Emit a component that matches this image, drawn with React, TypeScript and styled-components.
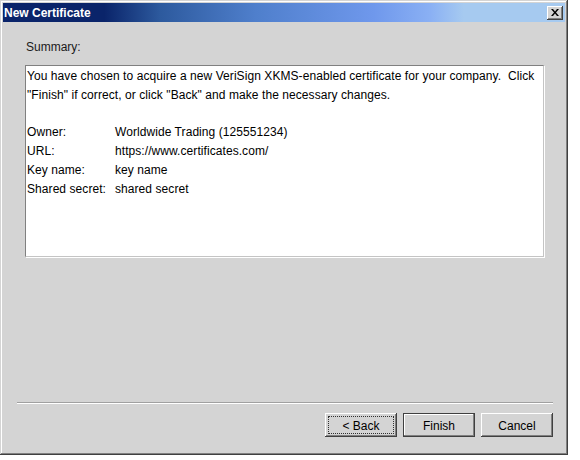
import styled, {createGlobalStyle} from 'styled-components';

const GlobalStyle = createGlobalStyle`
  body {
    margin: 0;
    background: #ffffff;
    font-family: "Liberation Sans", Arial, sans-serif;
  }
`

const details = [
    {label: 'Owner:', value: 'Worldwide Trading (125551234)'},
    {label: 'URL:', value: 'https://www.certificates.com/'},
    {label: 'Key name:', value: 'key name'},
    {label: 'Shared secret:', value: 'shared secret'},
]

export default function App() {
    return (
        <>
            <GlobalStyle/>
            <Window>
                <TitleBar>
                    <Title>New Certificate</Title>
                    <CloseButton aria-label="close">
                        <svg width="8" height="7" viewBox="0 0 8 7">
                            <path d="M0 0h2l2 2.5L6 0h2L5 3.5 8 7H6L4 4.5 2 7H0l3-3.5z" fill="#000"/>
                        </svg>
                    </CloseButton>
                </TitleBar>
                <Body>
                    <Label>Summary:</Label>
                    <SummaryBox>
                        <Paragraph>
                            You have chosen to acquire a new VeriSign XKMS-enabled certificate for your company.{'  '}Click
                            <br/>
                            "Finish" if correct, or click "Back" and make the necessary changes.
                        </Paragraph>
                        <Details>
                            {details.map(d => (
                                <Row key={d.label}>
                                    <span>{d.label}</span>
                                    <span>{d.value}</span>
                                </Row>
                            ))}
                        </Details>
                    </SummaryBox>
                </Body>
                <Footer>
                    <Separator/>
                    <ButtonRow>
                        <Button $focused>&lt; Back</Button>
                        <Button $default>Finish</Button>
                        <Button>Cancel</Button>
                    </ButtonRow>
                </Footer>
            </Window>
        </>
    );
}

const Window = styled.div`
  width: 568px;
  height: 455px;
  box-sizing: border-box;
  padding: 3px;
  background: #d4d4d4;
  display: flex;
  flex-direction: column;
  box-shadow: inset -1px -1px #404040, inset 1px 1px #d4d4d4,
  inset -2px -2px #808080, inset 2px 2px #ffffff;
`

const TitleBar = styled.div`
  height: 19px;
  display: flex;
  align-items: center;
  justify-content: space-between;
  padding: 0 2px 0 0;
  background: linear-gradient(90deg, #0a246a 0%, #0a246a 18%, #2d5a9e 28%, #4f7fcc 45%, #6f98ec 66%, #8ab0f4 76%, #a6caf0 82%, #a6caf0 100%);
`

const Title = styled.span`
  color: #ffffff;
  font-family: "Liberation Sans", Tahoma, sans-serif;
  font-weight: bold;
  font-size: 12px;
  padding-left: 1px;
`

const CloseButton = styled.button`
  width: 16px;
  height: 14px;
  padding: 0;
  border: none;
  background: #d4d4d4;
  display: flex;
  align-items: center;
  justify-content: center;
  box-shadow: inset -1px -1px #404040, inset 1px 1px #ffffff,
  inset -2px -2px #808080;
`

const Body = styled.div`
  flex: 1;
  display: flex;
  flex-direction: column;
  padding: 18px 21px 0 22px;
`

const Label = styled.div`
  font-size: 12px;
  line-height: 14px;
  color: #1a1a1a;
  padding-left: 1px;
`

const SummaryBox = styled.div`
  margin-top: 11px;
  height: 192px;
  box-sizing: border-box;
  background: #ffffff;
  border: 1px solid;
  border-color: #808080 #c4c4c4 #c4c4c4 #808080;
  box-shadow: 1px 1px 0 #ffffff;
  padding: 1px 1px 0;
  font-size: 12px;
  line-height: 18.8px;
  letter-spacing: 0.07px;
  color: #000000;
`

const Paragraph = styled.p`
  margin: 0 0 18.8px;
  white-space: pre-wrap;
`

const Details = styled.div`
  display: flex;
  flex-direction: column;
`

const Row = styled.div`
  display: grid;
  grid-template-columns: 88px auto;
`

const Footer = styled.div`
  display: flex;
  flex-direction: column;
  padding: 0 12px 15px 14px;
`

const Separator = styled.div`
  height: 1px;
  background: #a0a0a0;
  border-bottom: 1px solid #ffffff;
`

const ButtonRow = styled.div`
  display: flex;
  justify-content: flex-end;
  gap: 6px;
  margin-top: 9px;
`

const Button = styled.button<{ $focused?: boolean; $default?: boolean }>`
  position: relative;
  width: 72px;
  height: 24px;
  padding: 1px 0 0;
  border: none;
  background: #d4d4d4;
  font-family: "Liberation Sans", Arial, sans-serif;
  font-size: 12px;
  color: #000000;
  box-shadow: ${p => p.$default
    ? 'inset 0 0 0 1px #404040, inset -2px -2px #808080, inset 2px 2px #ffffff'
    : 'inset -1px -1px #404040, inset 1px 1px #ffffff, inset -2px -2px #808080'};

  &::after {
    content: '';
    display: ${p => p.$focused ? 'block' : 'none'};
    position: absolute;
    inset: 3px;
    border: 1px dotted #303030;
  }
`
